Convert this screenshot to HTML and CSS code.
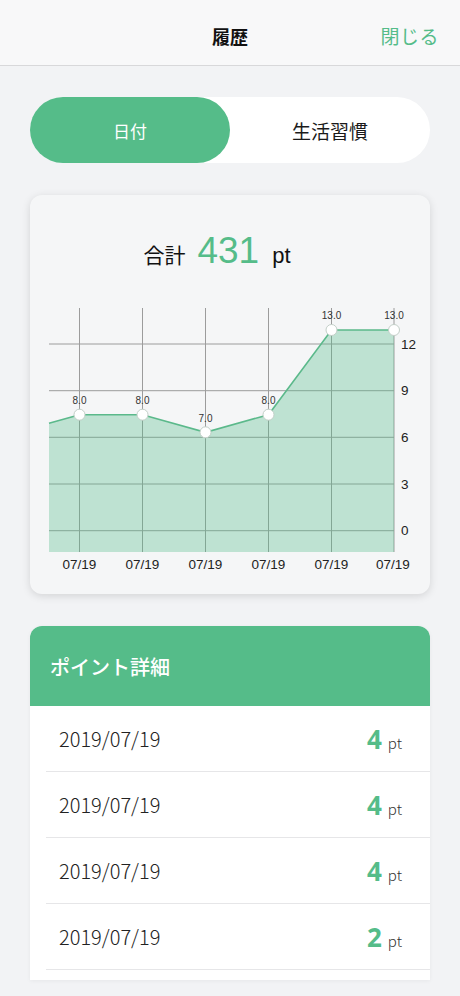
FILE: index.html
```html
<!DOCTYPE html>
<html lang="ja">
<head>
<meta charset="utf-8">
<title>履歴</title>
<link rel="stylesheet" href="styles.css">
</head>
<body>
<header class="nav">
  <div class="nav-side"></div>
  <h1 class="nav-title">履歴</h1>
  <div class="nav-side nav-right"><span class="close">閉じる</span></div>
</header>

<main class="content">
  <div class="segment">
    <div class="seg seg-active">日付</div>
    <div class="seg">生活習慣</div>
  </div>

  <section class="chart-card">
    <div class="total">
      <span class="total-label">合計</span>
      <span class="total-num">431</span>
      <span class="total-unit">pt</span>
    </div>
    <svg class="chart" width="400" height="290" viewBox="30 295 400 290" xmlns="http://www.w3.org/2000/svg">
      <g stroke="#9c9c9c" stroke-width="1" fill="none">
        <line x1="49" y1="344" x2="394" y2="344"/>
        <line x1="49" y1="390.7" x2="394" y2="390.7"/>
        <line x1="49" y1="437.3" x2="394" y2="437.3"/>
        <line x1="49" y1="484" x2="394" y2="484"/>
        <line x1="49" y1="530.7" x2="394" y2="530.7"/>
        <line x1="79.5" y1="308" x2="79.5" y2="552"/>
        <line x1="142.5" y1="308" x2="142.5" y2="552"/>
        <line x1="205.5" y1="308" x2="205.5" y2="552"/>
        <line x1="268.5" y1="308" x2="268.5" y2="552"/>
        <line x1="331.5" y1="308" x2="331.5" y2="552"/>
        <line x1="394" y1="308" x2="394" y2="552"/>
      </g>
      <path d="M49,423.3 L79.5,414.7 L142.5,414.7 L205.5,432.3 L268.5,414.7 L331.5,330 L394,330 L394,552 L49,552 Z" fill="#55bc89" fill-opacity="0.34"/>
      <path d="M49,423.3 L79.5,414.7 L142.5,414.7 L205.5,432.3 L268.5,414.7 L331.5,330 L394,330" fill="none" stroke="#5bb98b" stroke-width="1.6"/>
      <g fill="#ffffff" stroke="#c3cfc8" stroke-width="1">
        <circle cx="79.5" cy="414.7" r="5.5"/>
        <circle cx="142.5" cy="414.7" r="5.5"/>
        <circle cx="205.5" cy="432.3" r="5.5"/>
        <circle cx="268.5" cy="414.7" r="5.5"/>
        <circle cx="331.5" cy="330" r="5.5"/>
        <circle cx="394" cy="330" r="5.5"/>
      </g>
      <g class="pt-label" text-anchor="middle">
        <text x="79.5" y="404">8.0</text>
        <text x="142.5" y="404">8.0</text>
        <text x="205.5" y="421.5">7.0</text>
        <text x="268.5" y="404">8.0</text>
        <text x="331.5" y="319">13.0</text>
        <text x="394" y="319">13.0</text>
      </g>
      <g class="y-label">
        <text x="401" y="348.5">12</text>
        <text x="401" y="395">9</text>
        <text x="401" y="441.5">6</text>
        <text x="401" y="488.5">3</text>
        <text x="401" y="535">0</text>
      </g>
      <g class="x-label" text-anchor="middle">
        <text x="79.5" y="569">07/19</text>
        <text x="142.5" y="569">07/19</text>
        <text x="205.5" y="569">07/19</text>
        <text x="268.5" y="569">07/19</text>
        <text x="331.5" y="569">07/19</text>
        <text x="393" y="569">07/19</text>
      </g>
    </svg>
  </section>

  <section class="detail-card">
    <h2 class="detail-head">ポイント詳細</h2>
    <ul class="rows">
      <li class="row"><span class="date">2019/07/19</span><span class="pts"><b>4</b><small>pt</small></span></li>
      <li class="row"><span class="date">2019/07/19</span><span class="pts"><b>4</b><small>pt</small></span></li>
      <li class="row"><span class="date">2019/07/19</span><span class="pts"><b>4</b><small>pt</small></span></li>
      <li class="row"><span class="date">2019/07/19</span><span class="pts"><b>2</b><small>pt</small></span></li>
    </ul>
    <div class="rows-tail"></div>
  </section>
</main>
</body>
</html>
```

FILE: styles.css
```css
* { box-sizing: border-box; }
html, body { margin: 0; padding: 0; }
body {
  background: #f2f3f5;
  font-family: "Noto Sans CJK JP", "Noto Sans", sans-serif;
  color: #1a1a1a;
  width: 460px;
  height: 996px;
  overflow: hidden;
}

.nav {
  height: 66px;
  background: #f8f8f9;
  border-bottom: 1px solid #d8d8da;
  display: flex;
  align-items: center;
  padding: 0 21px;
}
.nav-side { flex: 1; display: flex; }
.nav-right { justify-content: flex-end; }
.nav-title {
  margin: 0;
  font-size: 18px;
  font-weight: 700;
  color: #111;
  padding-top: 6px;
}
.close {
  font-size: 19px;
  color: #55bc89;
  padding-top: 6px;
  letter-spacing: 0.5px;
}

.content {
  padding: 31px 30px 0;
  display: flex;
  flex-direction: column;
}

.segment {
  height: 66px;
  background: #ffffff;
  border-radius: 33px;
  display: flex;
}
.seg {
  flex: 1;
  display: flex;
  align-items: center;
  justify-content: center;
  font-size: 19px;
  color: #1a1a1a;
  border-radius: 33px;
}
.seg-active {
  background: #55bc89;
  color: #ffffff;
  font-size: 17px;
}

.chart-card {
  margin-top: 32px;
  height: 399px;
  background: #f5f6f7;
  border-radius: 12px;
  box-shadow: 0 2px 8px rgba(0, 0, 0, 0.13);
  display: flex;
  flex-direction: column;
  overflow: hidden;
}
.total {
  height: 100px;
  display: flex;
  align-items: baseline;
  justify-content: center;
  padding: 35px 26px 0 0;
}
.total-label { font-size: 21px; color: #111; margin-right: 12px; }
.total-num {
  font-family: "Liberation Sans", Arial, sans-serif;
  font-size: 37px;
  color: #55bc89;
  margin-right: 13px;
}
.total-unit {
  font-family: "Liberation Sans", Arial, sans-serif;
  font-size: 22px;
  color: #111;
}
.chart { display: block; }
.pt-label text {
  font-family: "Liberation Sans", Arial, sans-serif;
  font-size: 10px;
  fill: #333;
}
.y-label text, .x-label text {
  font-family: "Liberation Sans", Arial, sans-serif;
  font-size: 13.5px;
  fill: #222;
}

.detail-card {
  margin-top: 32px;
  background: #ffffff;
  border-radius: 12px 12px 0 0;
  overflow: hidden;
  box-shadow: 0 1px 4px rgba(0, 0, 0, 0.05);
}
.detail-head {
  margin: 0;
  height: 80px;
  background: #55bc89;
  color: #ffffff;
  font-size: 20px;
  font-weight: 500;
  display: flex;
  align-items: center;
  padding: 0 20px;
}
.rows { list-style: none; margin: 0; padding: 0 0 0 16px; }
.row {
  height: 66px;
  border-bottom: 1px solid #e6e6e8;
  display: flex;
  align-items: center;
  justify-content: space-between;
  padding: 0 28px 0 13px;
}
.date { font-size: 20px; font-weight: 300; color: #222; }
.pts { display: flex; align-items: baseline; gap: 6px; }
.pts b {
  font-family: "Noto Sans", sans-serif;
  font-size: 26px;
  font-weight: 700;
  color: #55bc89;
}
.pts small { font-size: 15px; color: #333; font-weight: 300; }
.rows-tail { height: 10px; }
```
